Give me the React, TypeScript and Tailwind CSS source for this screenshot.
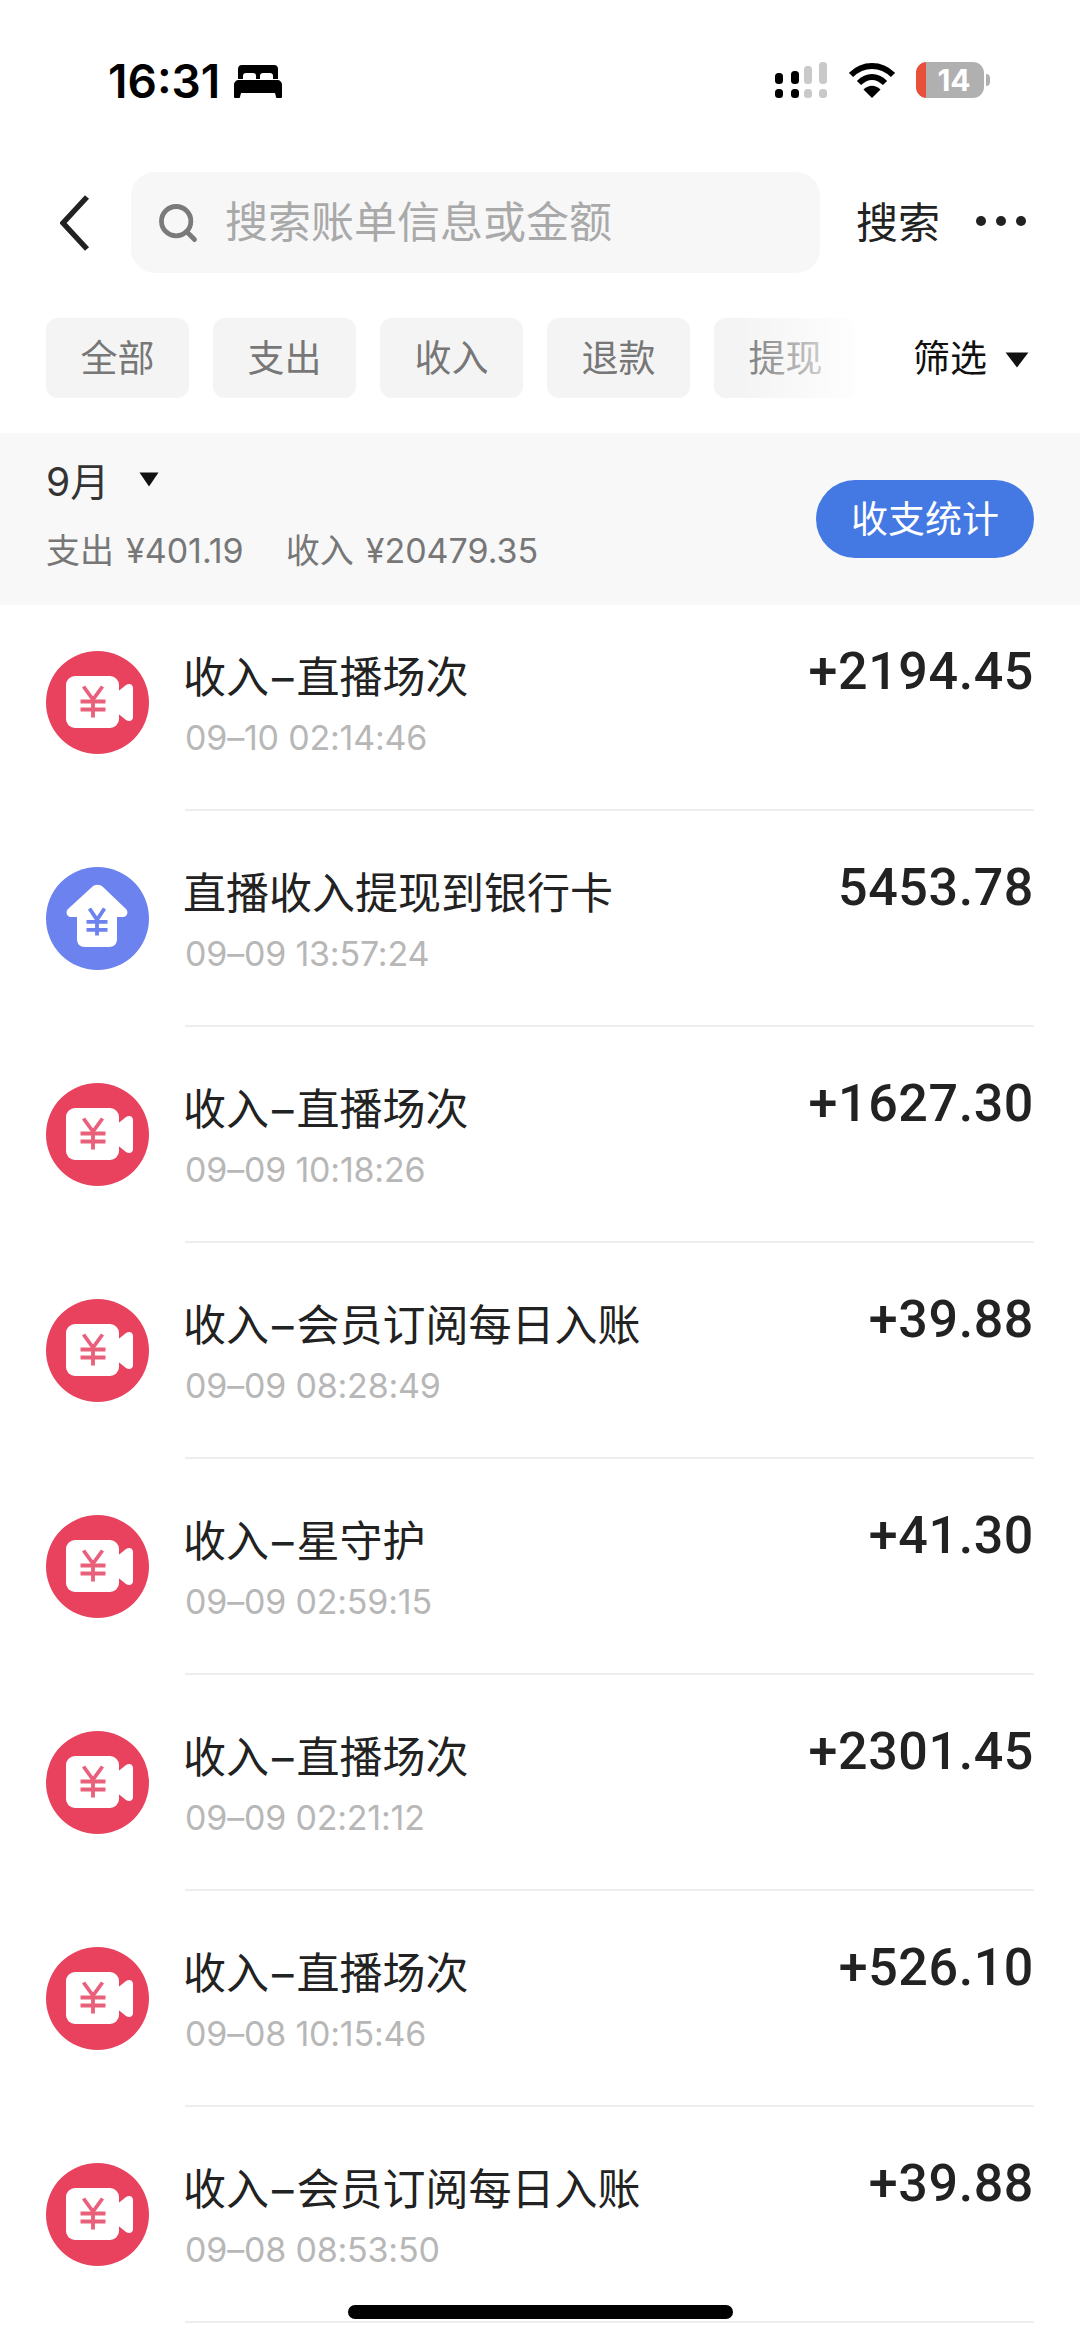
import { Search } from 'lucide-react';

const rows = [
  { kind: 'live', title: '收入', sub: '直播场次', time: '09–10 02:14:46', amount: '+2194.45' },
  { kind: 'bank', title: '直播收入提现到银行卡', sub: '', time: '09–09 13:57:24', amount: '5453.78' },
  { kind: 'live', title: '收入', sub: '直播场次', time: '09–09 10:18:26', amount: '+1627.30' },
  { kind: 'live', title: '收入', sub: '会员订阅每日入账', time: '09–09 08:28:49', amount: '+39.88' },
  { kind: 'live', title: '收入', sub: '星守护', time: '09–09 02:59:15', amount: '+41.30' },
  { kind: 'live', title: '收入', sub: '直播场次', time: '09–09 02:21:12', amount: '+2301.45' },
  { kind: 'live', title: '收入', sub: '直播场次', time: '09–08 10:15:46', amount: '+526.10' },
  { kind: 'live', title: '收入', sub: '会员订阅每日入账', time: '09–08 08:53:50', amount: '+39.88' },
];

const chips = ['全部', '支出', '收入', '退款', '提现'];

function Caret({ className }: { className: string }) {
  return (
    <svg viewBox="0 0 20 15" className={className} preserveAspectRatio="none">
      <path d="M0.5 0.5h19L10 14.5z" fill="#111" />
    </svg>
  );
}

function YenMark({ x, y, w, h, color }: { x: number; y: number; w: number; h: number; color: string }) {
  // drawn from the centre, the icon's yen sign is part of the pictogram
  const l = x - w / 2;
  const r = x + w / 2;
  const t = y - h / 2;
  const b = y + h / 2;
  const mid = t + h * 0.42;
  return (
    <g stroke={color} strokeWidth={3.8} fill="none">
      <path d={`M${l + 3} ${t}L${x} ${mid}L${r - 3} ${t}`} />
      <path d={`M${l} ${mid + 2}H${r}M${l} ${mid + 10}H${r}M${x} ${mid}V${b}`} />
    </g>
  );
}

function LiveIcon() {
  return (
    <svg viewBox="0 0 103 103" className="w-[103px] h-[103px] shrink-0">
      <circle cx="51.5" cy="51.5" r="51.5" fill="#e9425f" />
      <rect x="20" y="25" width="53" height="52" rx="9" fill="#fff" />
      <path d="M70 42l10-8c3-2 7-1 7 3v29c0 4-4 5-7 3l-10-8z" fill="#fff" />
      <YenMark x={47} y={51} w={25} h={31} color="#e8607a" />
    </svg>
  );
}

function BankIcon() {
  return (
    <svg viewBox="0 0 103 103" className="w-[103px] h-[103px] shrink-0">
      <circle cx="51.5" cy="51.5" r="51.5" fill="#6c82ef" />
      <path
        d="M46 20c3-3 8-3 11 0l23 22c3 3 1 8-3 8h-6v22c0 5-3 8-8 8H39c-5 0-8-3-8-8V50h-6c-4 0-6-5-3-8z"
        fill="#fff"
      />
      <YenMark x={51} y={55} w={21} h={27} color="#6c82ef" />
    </svg>
  );
}

function BedIcon() {
  return (
    <svg viewBox="0 0 48 33" className="w-[48px] h-[33px]">
      <path
        d="M8 0h32c3 0 4 2 4 4v10h-5v-3c0-2-1-3-3-3h-7c-2 0-3 1-3 3v3h-4v-3c0-2-1-3-3-3h-7c-2 0-3 1-3 3v3H4V4c0-2 1-4 4-4z"
        fill="#000"
      />
      <path d="M5 15h38c3 0 5 2 5 5v8H0v-8c0-3 2-5 5-5z" fill="#000" />
      <path d="M0 28h7l-1 4c0 1-1 1-2 1H2c-1 0-2 0-2-1zM41 28h7v4c0 1-1 1-2 1h-2c-1 0-2 0-2-1z" fill="#000" />
    </svg>
  );
}

function StatusIcons() {
  return (
    <div className="flex items-start">
      <svg viewBox="0 0 52 36" className="w-[52px] h-[36px] mr-[22px]">
        <rect x="0" y="11" width="8" height="11" rx="3.5" fill="#000" />
        <rect x="0" y="27" width="8" height="9" rx="3.5" fill="#000" />
        <rect x="16" y="9" width="8" height="13" rx="3.5" fill="#000" />
        <rect x="16" y="27" width="8" height="9" rx="3.5" fill="#000" />
        <rect x="29" y="4" width="8" height="18" rx="3.5" fill="#c9c9c9" />
        <rect x="29" y="27" width="8" height="9" rx="3.5" fill="#c9c9c9" />
        <rect x="44" y="0" width="8" height="22" rx="3.5" fill="#c9c9c9" />
        <rect x="44" y="27" width="8" height="9" rx="3.5" fill="#c9c9c9" />
      </svg>
      <svg viewBox="0 0 46 36" className="w-[46px] h-[36px] mr-[21px]">
        <path d="M2 13C14 1 32 1 44 13" stroke="#000" strokeWidth="6" fill="none" />
        <path d="M10 21C18 13 28 13 36 21" stroke="#000" strokeWidth="6" fill="none" />
        <path d="M14.5 27.5C20 22.500 26 22.500 31.500 27.500L23 36z" fill="#000" />
      </svg>
      <div className="relative w-[68px] h-[36px] rounded-[11px] bg-[#b0b0b0] overflow-hidden flex items-center justify-center pl-[8px]">
        <div className="absolute left-0 top-0 bottom-0 w-[10px] bg-[#e8503a]" />
        <span className="text-white text-[30px] font-bold leading-none font-['Inter',sans-serif]">14</span>
      </div>
      <div className="w-[4px] h-[12px] mt-[12px] ml-[2px] rounded-r-full bg-[#b0b0b0]" />
    </div>
  );
}

export default function App() {
  return (
    <div className="relative h-[2341px] w-[1080px] overflow-hidden bg-white font-['Inter','Noto_Sans_CJK_SC',sans-serif]">
      <div className="h-[172px] flex items-start justify-between pl-[108px] pr-[90px] pt-[62px]">
        <div className="flex items-center gap-[14px] mt-[1px]">
          <span className="text-[46px] leading-[36px] font-semibold text-black">16:31</span>
          <BedIcon />
        </div>
        <StatusIcons />
      </div>

      <div className="h-[101px] flex items-center pl-[60px]">
        <svg viewBox="0 0 30 56" className="w-[30px] h-[56px] shrink-0">
          <path d="M27 2L3 28l24 26" stroke="#222" strokeWidth="5.500" fill="none" />
        </svg>
        <div className="ml-[41px] w-[689px] h-[101px] rounded-[24px] bg-[#f7f7f7] flex items-center pl-[25px]">
          <Search className="w-[44px] h-[44px] text-[#7a7a7a]" strokeWidth={2.6} />
          <span className="ml-[25px] text-[43px] leading-none text-[#a9a9a9]">搜索账单信息或金额</span>
        </div>
        <span className="ml-[36px] text-[42px] leading-none text-[#222]">搜索</span>
        <div className="ml-[36px] -mt-[3px] flex gap-[10px]">
          <div className="w-[10px] h-[10px] rounded-full bg-[#222]" />
          <div className="w-[10px] h-[10px] rounded-full bg-[#222]" />
          <div className="w-[10px] h-[10px] rounded-full bg-[#222]" />
        </div>
      </div>

      <div className="relative mt-[45px] h-[80px] flex items-center pl-[46px]">
        <div className="flex gap-[24px]">
          {chips.map((chip) => (
            <div
              key={chip}
              className="w-[143px] h-[80px] rounded-[12px] bg-[#f4f4f4] flex items-center justify-center text-[37px] leading-none text-[#777]"
            >
              {chip}
            </div>
          ))}
        </div>
        <div className="absolute left-[740px] top-0 w-[130px] h-[80px] bg-gradient-to-r from-white/0 to-white" />
        <span className="absolute left-[913px] top-[22px] text-[37px] leading-none text-[#111]">筛选</span>
        <Caret className="absolute left-[1005px] top-[34px] w-[24px] h-[16px]" />
      </div>

      <div className="mt-[35px] h-[172px] bg-[#f8f8f9] flex items-center justify-between pl-[46px] pr-[46px]">
        <div className="flex flex-col -mt-[9px]">
          <div className="flex items-center h-[40px]">
            <span className="text-[39px] leading-none text-[#333]">9月</span>
            <Caret className="ml-[30px] -mt-[5px] w-[20px] h-[15px]" />
          </div>
          <div className="mt-[32px] flex items-center text-[34px] leading-none text-[#777]">
            <span>支出</span>
            <span className="ml-[12px]">¥401.19</span>
            <span className="ml-[42px]">收入</span>
            <span className="ml-[12px]">¥20479.35</span>
          </div>
        </div>
        <div className="w-[218px] h-[78px] rounded-full bg-[#4479e4] flex items-center justify-center text-[37px] leading-none text-white">
          收支统计
        </div>
      </div>

      <div>
        {rows.map((row, i) => (
          <div key={i} className={`flex pl-[46px] pr-[46px] ${i === 0 ? 'h-[206px] pt-[46px]' : 'h-[216px] pt-[56px]'}`}>
            {row.kind === 'live' ? <LiveIcon /> : <BankIcon />}
            <div className="ml-[36px] flex-1 flex justify-between border-b-2 border-[#eeeeee]">
              <div className="flex flex-col">
                <span className="-ml-[2px] text-[43px] leading-[52px] text-[#222]">
                  {row.title}
                  {row.sub && (
                    <>
                      <span className="mx-[3px]">–</span>
                      {row.sub}
                    </>
                  )}
                </span>
                <span className="mt-[15px] text-[34px] leading-[40px] tracking-[-0.2px] text-[#b7b7b7]">{row.time}</span>
              </div>
              <span className="-mt-[9px] text-[52px] leading-[60px] font-medium font-['Roboto',sans-serif] tracking-[0.6px] text-[#222]">{row.amount}</span>
            </div>
          </div>
        ))}
      </div>

      <div className="absolute left-[348px] top-[2305px] w-[385px] h-[14px] rounded-full bg-black" />
    </div>
  );
}
